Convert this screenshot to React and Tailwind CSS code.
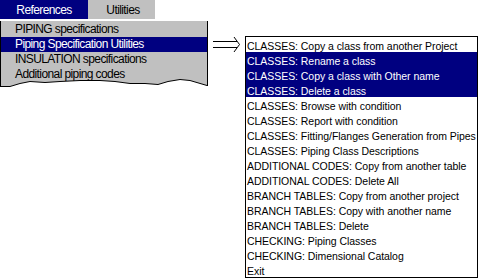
import React from "react";

const leftItems = [
  { t: "PIPING specifications" },
  { t: "Piping Specification Utilities", sel: true },
  { t: "INSULATION specifications" },
  { t: "Additional piping codes" },
];

const rightItems = [
  { t: "CLASSES: Copy a class from another Project" },
  { t: "CLASSES: Rename a class", sel: true },
  { t: "CLASSES: Copy a class with Other name", sel: true },
  { t: "CLASSES: Delete a class", sel: true },
  { t: "CLASSES: Browse with condition" },
  { t: "CLASSES: Report with condition" },
  { t: "CLASSES: Fitting/Flanges Generation from Pipes" },
  { t: "CLASSES: Piping Class Descriptions" },
  { t: "ADDITIONAL CODES: Copy from another table" },
  { t: "ADDITIONAL CODES: Delete All" },
  { t: "BRANCH TABLES: Copy from another project" },
  { t: "BRANCH TABLES: Copy with another name" },
  { t: "BRANCH TABLES: Delete" },
  { t: "CHECKING: Piping Classes" },
  { t: "CHECKING: Dimensional Catalog" },
  { t: "Exit" },
];

const wave = [
  [0, 8], [10, 8], [20, 5], [30, 3], [45, 4], [60, 3], [80, 2], [100, 2],
  [115, 3], [130, 5], [145, 5], [158, 6], [168, 3], [180, 1], [190, 2],
  [207, 7], [208, 7],
];

export default function App() {
  const wavePts = wave.map((p) => `${p[0]},${p[1] + 0.5}`).join(" ");
  const whitePts = wavePts + " 208,12 0,12";
  return (
    <div
      className="w-[478px] h-[278px] bg-white flex flex-row overflow-hidden"
      style={{ fontFamily: '"Liberation Sans", Arial, sans-serif' }}
    >
      {/* Left column */}
      <div className="w-[208px] flex flex-col">
        <div className="flex h-[19px] text-[12px] tracking-[-0.6px] leading-[21px]">
          <div className="w-[88px] bg-[#000080] text-white flex justify-center">
            References
          </div>
          <div className="w-[67px] bg-[#c0c0c0] text-black flex justify-center pl-[3px]">
            Utilities
          </div>
        </div>
        <div className="relative mt-[2px] bg-[#c0c0c0] border-l border-r border-black pt-[1px] pb-[8px] text-[12px] tracking-[-0.6px]">
          {leftItems.map((it, i) => (
            <div
              key={i}
              className={
                "h-[15px] leading-[15px] pl-[14px] whitespace-nowrap " +
                (it.sel ? "bg-[#000080] text-white" : "text-black")
              }
            >
              {it.t}
            </div>
          ))}
          <svg
            className="absolute left-[-1px] bottom-0"
            width="208"
            height="12"
            viewBox="0 0 208 12"
          >
            <polygon points={whitePts} fill="#ffffff" />
            <polyline points={wavePts} fill="none" stroke="#000" strokeWidth="1" />
          </svg>
        </div>
      </div>

      {/* Arrow */}
      <div className="w-[37px] pt-[36px]">
        <svg width="37" height="17" viewBox="0 0 37 17">
          <line x1="5" y1="5.5" x2="29" y2="5.5" stroke="#000" strokeWidth="1" />
          <line x1="5" y1="11.5" x2="29" y2="11.5" stroke="#000" strokeWidth="1" />
          <polyline
            points="26,1 31.5,8.5 26,16"
            fill="none"
            stroke="#000"
            strokeWidth="1"
          />
        </svg>
      </div>

      {/* Right list */}
      <div className="mt-[36px] w-[233px] h-[242px] border border-black bg-white text-[10.5px] tracking-[-0.05px]">
        {rightItems.map((it, i) => (
          <div
            key={i}
            className={
              "h-[15px] leading-[19px] pl-[1px] whitespace-nowrap overflow-visible " +
              (it.sel ? "bg-[#000080] text-white" : "text-black")
            }
          >
            {it.t}
          </div>
        ))}
      </div>
    </div>
  );
}
